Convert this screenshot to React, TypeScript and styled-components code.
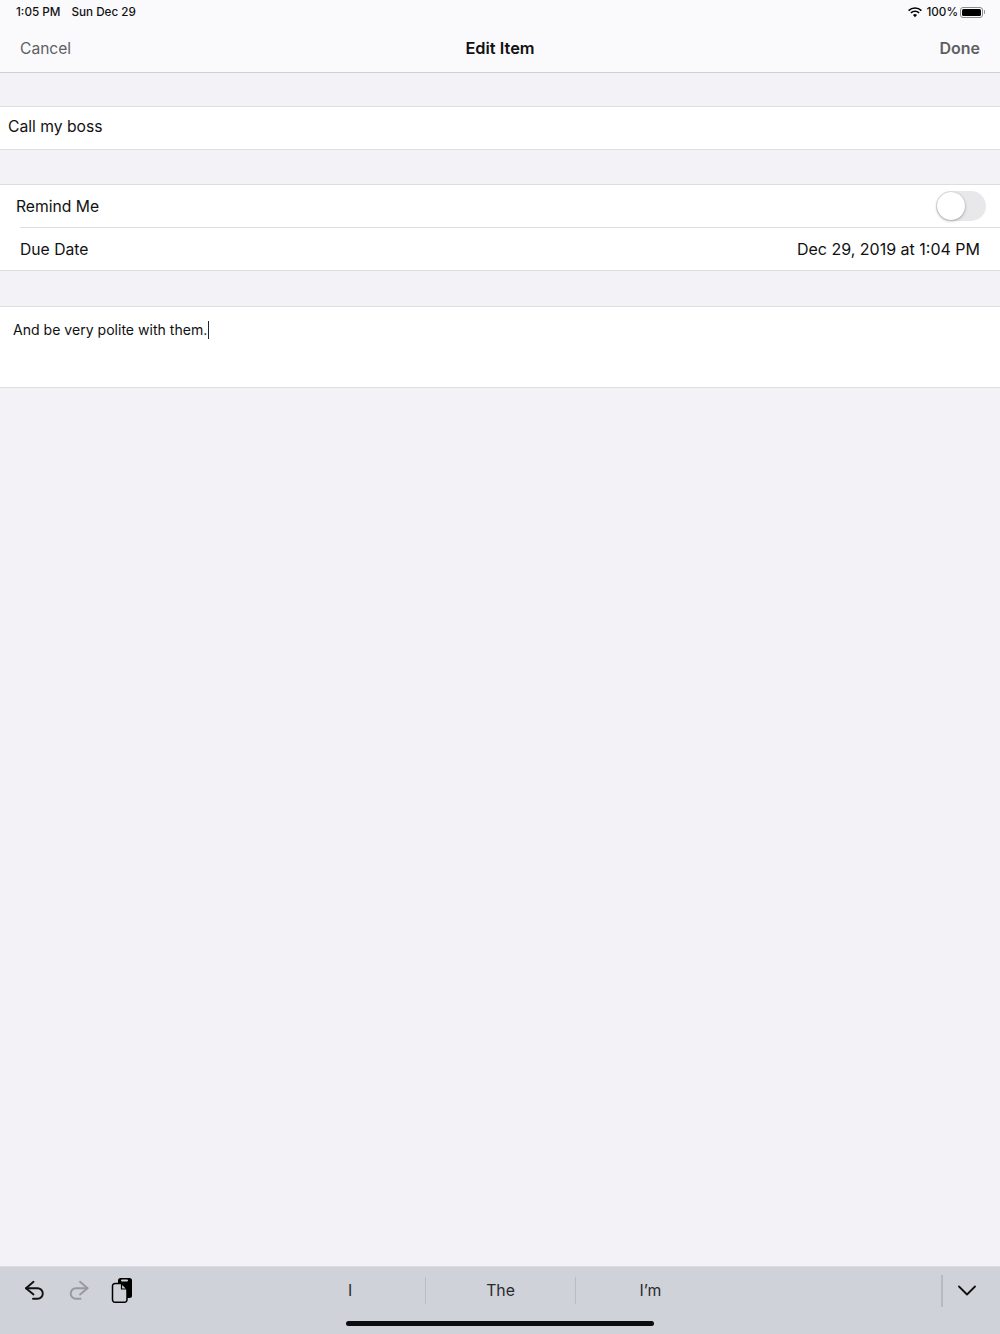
import styled, { createGlobalStyle } from 'styled-components';

const GlobalStyle = createGlobalStyle`
  html, body {
    margin: 0;
    padding: 0;
    height: 100%;
  }
  body {
    background: #f2f2f7;
    font-family: Inter, "Liberation Sans", sans-serif;
    color: #111;
  }
`;

const Screen = styled.div`
  width: 1000px;
  height: 1334px;
  display: flex;
  flex-direction: column;
  overflow: hidden;
  background: #f2f2f7;
`;

const Header = styled.header`
  height: 72px;
  background: #fafafd;
  border-bottom: 1px solid #cfcfd2;
  display: flex;
  flex-direction: column;
  flex-shrink: 0;
`;

const StatusBar = styled.div`
  height: 24px;
  padding: 0 15px 0 16px;
  display: flex;
  align-items: center;
  justify-content: space-between;
  font-size: 11.7px;
  font-weight: 500;
  color: #111;
`;

const StatusGroup = styled.div`
  display: flex;
  align-items: center;
  gap: ${(p: { $gap: number }) => p.$gap}px;
`;

const NavBar = styled.nav`
  height: 48px;
  padding: 0 20px;
  display: grid;
  grid-template-columns: 1fr auto 1fr;
  align-items: center;
`;

const NavButton = styled.span<{ $end?: boolean; $bold?: boolean }>`
  font-size: ${(p) => (p.$bold ? 16 : 15.6)}px;
  font-weight: ${(p) => (p.$bold ? 600 : 400)};
  color: #5f5f62;
  text-align: ${(p) => (p.$end ? 'right' : 'left')};
`;

const NavTitle = styled.span`
  font-size: 16.4px;
  font-weight: 600;
  color: #111;
`;

const Section = styled.section<{ $gap: number }>`
  margin-top: ${(p) => p.$gap}px;
  background: #fff;
  border-top: 1px solid #dddde0;
  border-bottom: 1px solid #dddde0;
  flex-shrink: 0;
`;

const Row = styled.div<{ $indent: number; $height: number; $lift?: number }>`
  height: ${(p) => p.$height}px;
  box-sizing: border-box;
  padding: 0 14px ${(p) => p.$lift ?? 0}px ${(p) => p.$indent}px;
  display: flex;
  align-items: center;
  justify-content: space-between;
  font-size: 15.7px;
  color: #111;
`;

const RowDivider = styled.div`
  height: 1px;
  margin-left: 20px;
  background: #dddde0;
`;

const DateValue = styled.span`
  margin-right: 6px;
  font-size: 16px;
`;

const Toggle = styled.div`
  width: 50px;
  height: 30px;
  border-radius: 15px;
  background: #e8e8ea;
  position: relative;
`;

const ToggleKnob = styled.div`
  position: absolute;
  top: 1px;
  left: 1px;
  width: 28px;
  height: 28px;
  border-radius: 50%;
  background: #fff;
  box-shadow: 0 1px 3px rgba(0, 0, 0, 0.3), 0 0 1px rgba(0, 0, 0, 0.2);
`;

const Notes = styled.div`
  height: 80px;
  padding: 14px 13px 0;
  box-sizing: border-box;
  font-size: 14.07px;
  line-height: 18px;
  color: #111;
`;

const Caret = styled.span`
  display: inline-block;
  width: 1.5px;
  height: 18px;
  margin-left: 0.5px;
  background: #1d2733;
  vertical-align: -4px;
`;

const Spacer = styled.div`
  flex: 1;
`;

const KeyboardBar = styled.div`
  height: 67px;
  background: #cfd2d9;
  border-top: 1px solid #dcdce0;
  display: flex;
  flex-direction: column;
  flex-shrink: 0;
`;

const KeyboardRow = styled.div`
  height: 47px;
  display: flex;
  align-items: center;
`;

const Tools = styled.div`
  width: 275px;
  padding-left: 24px;
  box-sizing: border-box;
  display: flex;
  align-items: center;
  gap: 21.5px;
`;

const Suggestions = styled.div`
  width: 450px;
  display: grid;
  grid-template-columns: repeat(3, 1fr);
`;

const Suggestion = styled.div`
  height: 27px;
  box-sizing: border-box;
  padding-bottom: 1px;
  display: flex;
  align-items: center;
  justify-content: center;
  font-size: 15.8px;
  color: #2a2a2c;
  & + & {
    border-left: 1px solid #b9bcc3;
  }
`;

const Dismiss = styled.div`
  margin-left: auto;
  width: 59px;
  height: 32px;
  box-sizing: border-box;
  padding-right: 10px;
  border-left: 2px solid #b7babf;
  display: flex;
  align-items: center;
  justify-content: center;
`;

const HomeSlot = styled.div`
  flex: 1;
  display: flex;
  justify-content: center;
`;

const HomeIndicator = styled.div`
  width: 308px;
  height: 5px;
  margin-top: 7px;
  border-radius: 3px;
  background: #0c0c0e;
`;

const Battery = styled.div`
  display: flex;
  align-items: center;
  gap: 0.5px;
`;

const BatteryBody = styled.div`
  width: 23px;
  height: 11px;
  padding: 1px;
  box-sizing: border-box;
  border: 1px solid #8c8c8e;
  border-radius: 3px;
`;

const BatteryFill = styled.div`
  width: 100%;
  height: 100%;
  background: #000;
  border-radius: 1.5px;
`;

const BatteryCap = styled.div`
  width: 1.5px;
  height: 4px;
  background: #8c8c8e;
  border-radius: 0 1px 1px 0;
`;

const WifiGlyph = styled.svg`
  margin-right: 2px;
`;

const WifiIcon = () => (
  <WifiGlyph width="14" height="11" viewBox="0 0 14 11">
    <path d="M0.6 3.6 A9.2 9.2 0 0 1 13.4 3.6" fill="none" stroke="#000" strokeWidth="1.6" />
    <path d="M2.9 5.9 A5.9 5.9 0 0 1 11.1 5.9" fill="none" stroke="#000" strokeWidth="1.6" />
    <path d="M5 8 A2.9 2.9 0 0 1 9 8 L7 10.2 Z" fill="#000" />
  </WifiGlyph>
);

const UndoIcon = ({ color }: { color: string }) => (
  <svg width="22" height="22" viewBox="0 0 22 22" fill="none" stroke={color} strokeWidth="1.9" strokeLinecap="round" strokeLinejoin="round">
    <path d="M9.5 1.8 L2 8.2 L9.5 14.5" />
    <path d="M2 8.2 H13.5 A5.2 5.2 0 0 1 13.5 18.8 H9" />
  </svg>
);

const RedoIcon = ({ color }: { color: string }) => (
  <svg width="22" height="22" viewBox="0 0 22 22" fill="none" stroke={color} strokeWidth="1.9" strokeLinecap="round" strokeLinejoin="round">
    <path d="M12 1.8 L19.5 8.2 L12 14.5" />
    <path d="M19.5 8.2 H8 A5.2 5.2 0 0 0 8 18.8 H12.5" />
  </svg>
);

const PasteIcon = () => (
  <svg width="22" height="25" viewBox="0 0 22 25">
    <rect x="7" y="0" width="14" height="20" rx="2.5" fill="#000" />
    <rect x="10" y="1.5" width="7" height="2" rx="1" fill="#cfd2d9" />
    <path d="M4 5.5 H10.5 L16 11 V21.5 A2.5 2.5 0 0 1 13.5 24.2 H4 A2.5 2.5 0 0 1 1.5 21.5 V8 A2.5 2.5 0 0 1 4 5.5 Z" fill="#cfd2d9" stroke="#000" strokeWidth="1.5" />
    <path d="M10.5 5.5 V11 H16 Z" fill="#cfd2d9" stroke="#000" strokeWidth="1.2" />
  </svg>
);

const ChevronIcon = () => (
  <svg width="18" height="11" viewBox="0 0 18 11" fill="none" stroke="#111" strokeWidth="1.8" strokeLinecap="round" strokeLinejoin="round">
    <path d="M1 1.5 L9 9.5 L17 1.5" />
  </svg>
);

export default function App() {
  return (
    <Screen>
      <GlobalStyle />
      <Header>
        <StatusBar>
          <StatusGroup $gap={11}>
            <span>1:05 PM</span>
            <span>Sun Dec 29</span>
          </StatusGroup>
          <StatusGroup $gap={2}>
            <WifiIcon />
            <span>100%</span>
            <Battery>
              <BatteryBody>
                <BatteryFill />
              </BatteryBody>
              <BatteryCap />
            </Battery>
          </StatusGroup>
        </StatusBar>
        <NavBar>
          <NavButton>Cancel</NavButton>
          <NavTitle>Edit Item</NavTitle>
          <NavButton $end $bold>Done</NavButton>
        </NavBar>
      </Header>

      <Section $gap={33}>
        <Row $indent={8} $height={42} $lift={3}>Call my boss</Row>
      </Section>

      <Section $gap={34}>
        <Row $indent={16} $height={42}>
          <span>Remind Me</span>
          <Toggle>
            <ToggleKnob />
          </Toggle>
        </Row>
        <RowDivider />
        <Row $indent={20} $height={42}>
          <span>Due Date</span>
          <DateValue>Dec 29, 2019 at 1:04 PM</DateValue>
        </Row>
      </Section>

      <Section $gap={35}>
        <Notes>
          And be very polite with them.<Caret />
        </Notes>
      </Section>

      <Spacer />

      <KeyboardBar>
        <KeyboardRow>
          <Tools>
            <UndoIcon color="#111" />
            <RedoIcon color="#97999e" />
            <PasteIcon />
          </Tools>
          <Suggestions>
            <Suggestion>I</Suggestion>
            <Suggestion>The</Suggestion>
            <Suggestion>I’m</Suggestion>
          </Suggestions>
          <Dismiss>
            <ChevronIcon />
          </Dismiss>
        </KeyboardRow>
        <HomeSlot>
          <HomeIndicator />
        </HomeSlot>
      </KeyboardBar>
    </Screen>
  );
}
